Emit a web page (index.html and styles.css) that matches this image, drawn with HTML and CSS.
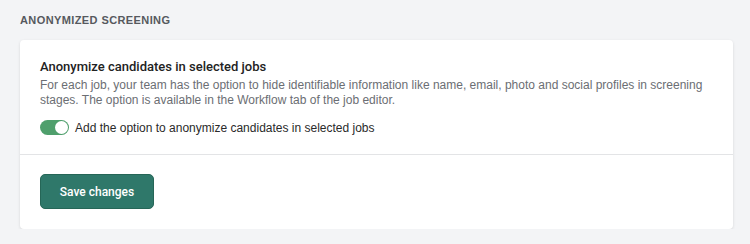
FILE: index.html
```html
<!DOCTYPE html>
<html>
<head>
<meta charset="utf-8">
<link rel="stylesheet" href="styles.css">
</head>
<body>
<section class="section">
  <h2 class="section-title">Anonymized screening</h2>
  <div class="card">
    <div class="card-body">
      <h3 class="opt-title">Anonymize candidates in selected jobs</h3>
      <p class="opt-desc">For each job, your team has the option to hide identifiable information like name, email, photo and social profiles in screening stages. The option is available in the Workflow tab of the job editor.</p>
      <label class="toggle-row">
        <span class="toggle"><span class="knob"></span></span>
        <span class="toggle-label">Add the option to anonymize candidates in selected jobs</span>
      </label>
    </div>
    <div class="card-footer">
      <button class="btn-primary">Save changes</button>
    </div>
  </div>
</section>
</body>
</html>
```
FILE: styles.css
```css
html, body {
  margin: 0;
  padding: 0;
  background: #f3f4f6;
  font-family: "Liberation Sans", Arial, sans-serif;
}
.section {
  padding: 13px 17px 0 20px;
}
.section-title {
  margin: 0 0 13px 0;
  font-size: 11px;
  font-weight: 700;
  letter-spacing: 0.4px;
  text-transform: uppercase;
  color: #56595e;
  line-height: 14px;
}
.card {
  background: #fff;
  border-radius: 4px;
  box-shadow: 0 1px 3px rgba(0,0,0,0.12);
}
.card-body {
  padding: 18px 20px 19px 20px;
  border-bottom: 1px solid #e3e4e6;
}
.opt-title {
  margin: 0;
  font-family: Roboto, "Liberation Sans", sans-serif;
  font-size: 13px;
  font-weight: 500;
  color: #222;
  line-height: 17px;
}
.opt-desc {
  margin: 3px 0 12px 0;
  font-size: 12px;
  color: #6b6e73;
  line-height: 15px;
}
.toggle-row {
  display: flex;
  align-items: center;
  gap: 6px;
}
.toggle {
  width: 29px;
  height: 15px;
  border-radius: 8px;
  background: #4f9f6c;
  display: flex;
  justify-content: flex-end;
  align-items: center;
  padding: 0 1px;
  box-sizing: border-box;
}
.knob {
  width: 13px;
  height: 13px;
  border-radius: 50%;
  background: #fff;
}
.toggle-label {
  font-size: 12px;
  color: #2a2a2a;
}
.card-footer {
  padding: 19px 20px 20px 20px;
}
.btn-primary {
  display: block;
  width: 114px;
  height: 35px;
  border: 1px solid #266657;
  border-radius: 5px;
  background: #2f786a;
  color: #fff;
  font-family: Roboto, "Liberation Sans", sans-serif;
  font-size: 12px;
  font-weight: 500;
}
```
